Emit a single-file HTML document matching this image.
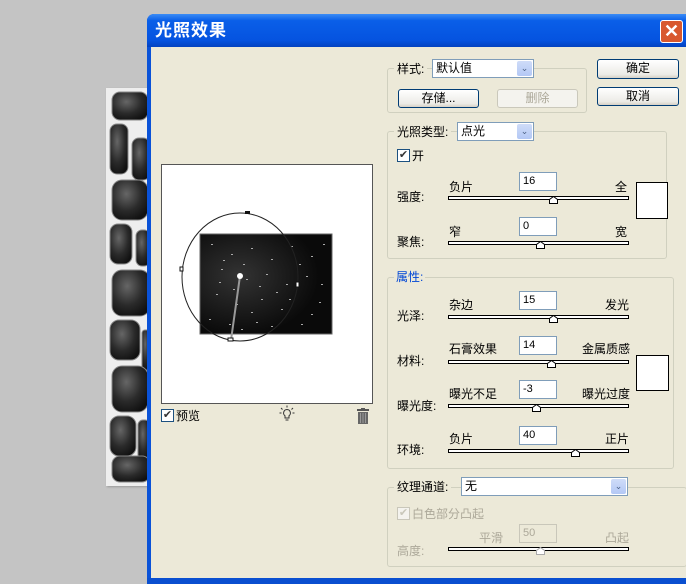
<!DOCTYPE html>
<html><head><meta charset="utf-8"><style>
*{margin:0;padding:0;box-sizing:border-box}
body{width:686px;height:584px;background:#c4c4c4;position:relative;overflow:hidden;font-family:"Liberation Sans","Noto Sans CJK SC",sans-serif;font-size:12px;color:#000}
.a{position:absolute}
.t{position:absolute;font-size:12px;line-height:14px;white-space:nowrap}
.inp{position:absolute;background:#fff;border:1px solid #7f9db9;font-size:11px;padding-left:3px;line-height:16px;width:38px;height:19px}
.btn{position:absolute;border:1px solid #003c74;border-radius:3px;background:linear-gradient(#fff,#ecebe6 80%,#d6d0c5);text-align:center;font-size:12px;line-height:16px}
.sel{position:absolute;background:#fff;border:1px solid #7f9db9;height:19px;font-size:12px;line-height:17px;padding-left:3px}
.sel i{position:absolute;right:1px;top:1px;width:15px;height:15px;background:linear-gradient(#cfdcf8,#b3c8f5);border-radius:2px;color:#4d6185;font-style:normal;font-size:9px;text-align:center;line-height:15px}
.grp{position:absolute;border:1px solid #d0d0bf;border-radius:3px}
.sl{position:absolute;height:4px;border:1px solid #000;background:#fff;width:181px;left:448px}
.th{position:absolute;width:9px;height:8px}
.sw{position:absolute;background:#fff;border:1px solid #000}
.cb{position:absolute;width:13px;height:13px;border:1px solid #1c5180;background:#fff;font-size:11px;line-height:11px;text-align:center;color:#333}
</style></head><body>
<!-- texture strip -->
<div class="a" style="left:106px;top:88px;width:44px;height:398px;background:#eee;box-shadow:1px 1px 2px #999"></div>
<svg class="a" style="left:108px;top:90px" width="42" height="394">
<defs><radialGradient id="s" cx="0.4" cy="0.35" r="0.7"><stop offset="0" stop-color="#666"/><stop offset="0.6" stop-color="#2a2a2a"/><stop offset="1" stop-color="#111"/></radialGradient></defs>
<g fill="url(#s)" stroke="#888" stroke-width="1">
<rect x="4" y="2" width="36" height="28" rx="8"/><rect x="2" y="34" width="18" height="50" rx="7"/><rect x="24" y="48" width="18" height="42" rx="7"/>
<rect x="4" y="90" width="36" height="40" rx="10"/><rect x="2" y="134" width="22" height="40" rx="8"/><rect x="28" y="140" width="14" height="36" rx="6"/>
<rect x="4" y="180" width="38" height="46" rx="10"/><rect x="2" y="230" width="30" height="40" rx="9"/><rect x="34" y="240" width="8" height="40" rx="3"/>
<rect x="4" y="276" width="36" height="46" rx="10"/><rect x="2" y="326" width="26" height="40" rx="9"/><rect x="30" y="330" width="12" height="40" rx="5"/>
<rect x="4" y="366" width="38" height="26" rx="8"/></g></svg>
<!-- dialog -->
<div class="a" style="left:147px;top:14px;width:545px;height:570px;background:#0a52d8;border-radius:7px 7px 0 0"></div>
<div class="a" style="left:147px;top:14px;width:545px;height:33px;background:linear-gradient(#3b8cf5,#0a5fe8 20%,#0553e0 80%,#0342c0);border-radius:7px 7px 0 0"></div>
<div class="t" style="left:155px;top:21px;color:#fff;font-size:17px;line-height:20px;font-weight:bold;letter-spacing:1px">光照效果</div>
<div class="a" style="left:660px;top:20px;width:23px;height:23px;background:#d8582e;border:1px solid #fff;border-radius:3px;color:#fff;text-align:center;font-size:18px;line-height:20px;font-weight:bold">✕</div>
<div class="a" style="left:151px;top:47px;width:540px;height:531px;background:#ece9d8"></div>
<!-- preview -->
<div class="a" style="left:161px;top:164px;width:212px;height:240px;background:#fff;border:1px solid #555"></div>
<svg class="a" style="left:161px;top:164px" width="212" height="240">
<defs><radialGradient id="g" cx="0.3" cy="0.42" r="0.6"><stop offset="0" stop-color="#333"/><stop offset="1" stop-color="#0a0a0a"/></radialGradient></defs>
<rect x="39" y="70" width="132" height="100" fill="url(#g)" stroke="#666"/>
<g fill="#aaa">
<rect x="50" y="80" width="2" height="1"/><rect x="70" y="90" width="2" height="1"/><rect x="90" y="84" width="2" height="1"/><rect x="110" y="95" width="2" height="1"/><rect x="130" y="82" width="2" height="1"/><rect x="150" y="92" width="2" height="1"/><rect x="60" y="105" width="2" height="1"/><rect x="85" y="115" width="2" height="1"/><rect x="105" y="110" width="2" height="1"/><rect x="125" y="120" width="2" height="1"/><rect x="145" y="112" width="2" height="1"/><rect x="55" y="130" width="2" height="1"/><rect x="75" y="140" width="2" height="1"/><rect x="100" y="135" width="2" height="1"/><rect x="120" y="145" width="2" height="1"/><rect x="158" y="138" width="2" height="1"/><rect x="48" y="155" width="2" height="1"/><rect x="68" y="160" width="2" height="1"/><rect x="95" y="158" width="2" height="1"/><rect x="140" y="160" width="2" height="1"/><rect x="62" y="96" width="2" height="1"/><rect x="82" y="100" width="2" height="1"/><rect x="138" y="100" width="2" height="1"/><rect x="115" y="128" width="2" height="1"/><rect x="90" y="148" width="2" height="1"/><rect x="150" y="150" width="2" height="1"/>
<rect x="58" y="118" width="2" height="1"/><rect x="72" y="125" width="2" height="1"/><rect x="98" y="122" width="2" height="1"/><rect x="128" y="135" width="2" height="1"/><rect x="162" y="80" width="2" height="1"/><rect x="160" y="120" width="2" height="1"/><rect x="110" y="162" width="2" height="1"/><rect x="80" y="165" width="2" height="1"/>
</g>
<ellipse cx="79" cy="113" rx="58" ry="64" fill="none" stroke="#222" stroke-width="1"/>
<line x1="79" y1="112" x2="70" y2="176" stroke="#999" stroke-width="2"/>
<circle cx="79" cy="112" r="3" fill="#fff"/>
<rect x="84" y="47" width="5" height="3" fill="#111"/><rect x="19" y="103" width="3" height="4" fill="#fff" stroke="#111"/><rect x="135" y="118" width="3" height="5" fill="#fff" stroke="#111"/><rect x="67" y="174" width="5" height="3" fill="#fff" stroke="#111"/>
</svg>
<div class="cb" style="left:161px;top:409px">✔</div>
<div class="t" style="left:176px;top:409px">预览</div>
<svg class="a" style="left:279px;top:405px" width="16" height="18"><g fill="none" stroke="#333" stroke-width="1"><path d="M8 4.5a3.5 3.5 0 0 0-2 6.3V13h4v-2.2a3.5 3.5 0 0 0-2-6.3z"/><path d="M6.5 15h3M8 0.5v2M2 3l1.5 1.5M14 3l-1.5 1.5M0.5 8h2M13.5 8h2"/></g></svg>
<svg class="a" style="left:356px;top:408px" width="14" height="17"><rect x="1" y="1" width="12" height="2" fill="#555"/><rect x="5" y="0" width="4" height="1" fill="#555"/><rect x="2" y="4" width="10" height="12" fill="#666"/><g stroke="#999"><path d="M4.5 5v10M7 5v10M9.5 5v10"/></g></svg>
<!-- group 1 -->
<div class="grp" style="left:387px;top:68px;width:200px;height:45px"></div>
<div class="t" style="left:394px;top:62px;background:#ece9d8;padding:0 3px">样式:</div>
<div class="sel" style="left:432px;top:59px;width:102px">默认值<i>⌄</i></div>
<div class="btn" style="left:398px;top:89px;width:81px;height:19px">存储...</div>
<div class="btn" style="left:497px;top:89px;width:81px;height:19px;border-color:#cac8bb;color:#aca899;background:#f4f3ee">删除</div>
<div class="btn" style="left:597px;top:59px;width:82px;height:20px">确定</div>
<div class="btn" style="left:597px;top:87px;width:82px;height:19px">取消</div>
<!-- group 2 -->
<div class="grp" style="left:387px;top:131px;width:280px;height:128px"></div>
<div class="t" style="left:394px;top:125px;background:#ece9d8;padding:0 3px">光照类型:</div>
<div class="sel" style="left:457px;top:122px;width:77px">点光<i>⌄</i></div>
<div class="cb" style="left:397px;top:149px">✔</div>
<div class="t" style="left:412px;top:149px">开</div>
<div class="t" style="left:397px;top:190px">强度:</div>
<div class="t" style="left:449px;top:180px">负片</div>
<div class="inp" style="left:519px;top:172px">16</div>
<div class="t" style="left:615px;top:180px">全</div>
<div class="sl" style="top:196px"></div>
<svg class="th" style="left:549px;top:196px"><path d="M0.5 7.5V3.5L4.5 0.5L8.5 3.5V7.5Z" fill="#fff" stroke="#000"/></svg>
<div class="sw" style="left:636px;top:182px;width:32px;height:37px"></div>
<div class="t" style="left:397px;top:235px">聚焦:</div>
<div class="t" style="left:449px;top:225px">窄</div>
<div class="inp" style="left:519px;top:217px">0</div>
<div class="t" style="left:615px;top:225px">宽</div>
<div class="sl" style="top:241px"></div>
<svg class="th" style="left:536px;top:241px"><path d="M0.5 7.5V3.5L4.5 0.5L8.5 3.5V7.5Z" fill="#fff" stroke="#000"/></svg>
<!-- group 3 -->
<div class="grp" style="left:387px;top:277px;width:287px;height:192px"></div>
<div class="t" style="left:394px;top:270px;background:#ece9d8;padding:0 2px;color:#0046d5">属性:</div>
<div class="t" style="left:397px;top:309px">光泽:</div>
<div class="t" style="left:449px;top:298px">杂边</div>
<div class="inp" style="left:519px;top:291px">15</div>
<div class="t" style="left:605px;top:298px">发光</div>
<div class="sl" style="top:315px"></div>
<svg class="th" style="left:549px;top:315px"><path d="M0.5 7.5V3.5L4.5 0.5L8.5 3.5V7.5Z" fill="#fff" stroke="#000"/></svg>
<div class="t" style="left:397px;top:354px">材料:</div>
<div class="t" style="left:449px;top:342px">石膏效果</div>
<div class="inp" style="left:519px;top:336px">14</div>
<div class="t" style="left:582px;top:342px">金属质感</div>
<div class="sl" style="top:360px"></div>
<svg class="th" style="left:547px;top:360px"><path d="M0.5 7.5V3.5L4.5 0.5L8.5 3.5V7.5Z" fill="#fff" stroke="#000"/></svg>
<div class="sw" style="left:636px;top:355px;width:33px;height:36px"></div>
<div class="t" style="left:397px;top:399px">曝光度:</div>
<div class="t" style="left:449px;top:387px">曝光不足</div>
<div class="inp" style="left:519px;top:380px">-3</div>
<div class="t" style="left:582px;top:387px">曝光过度</div>
<div class="sl" style="top:404px"></div>
<svg class="th" style="left:532px;top:404px"><path d="M0.5 7.5V3.5L4.5 0.5L8.5 3.5V7.5Z" fill="#fff" stroke="#000"/></svg>
<div class="t" style="left:397px;top:443px">环境:</div>
<div class="t" style="left:449px;top:432px">负片</div>
<div class="inp" style="left:519px;top:426px">40</div>
<div class="t" style="left:605px;top:432px">正片</div>
<div class="sl" style="top:449px"></div>
<svg class="th" style="left:571px;top:449px"><path d="M0.5 7.5V3.5L4.5 0.5L8.5 3.5V7.5Z" fill="#fff" stroke="#000"/></svg>
<!-- group 4 -->
<div class="grp" style="left:387px;top:487px;width:300px;height:80px"></div>
<div class="t" style="left:394px;top:480px;background:#ece9d8;padding:0 3px">纹理通道:</div>
<div class="sel" style="left:461px;top:477px;width:167px">无<i>⌄</i></div>
<div class="cb" style="left:397px;top:507px;border-color:#c9c7ba;color:#c9c7ba;background:#f4f3ee">✔</div>
<div class="t" style="left:412px;top:507px;color:#aca899">白色部分凸起</div>
<div class="t" style="left:397px;top:544px;color:#aca899">高度:</div>
<div class="t" style="left:479px;top:531px;color:#aca899">平滑</div>
<div class="inp" style="left:519px;top:524px;background:#ece9d8;border-color:#c9c7ba;color:#aca899">50</div>
<div class="t" style="left:605px;top:531px;color:#aca899">凸起</div>
<div class="sl" style="top:547px"></div>
<svg class="th" style="left:536px;top:547px"><path d="M0.5 7.5V3.5L4.5 0.5L8.5 3.5V7.5Z" fill="#fff" stroke="#aaa"/></svg>
<div class="a" style="left:147px;top:578px;width:545px;height:6px;background:#0a4fd0"></div>
</body></html>
